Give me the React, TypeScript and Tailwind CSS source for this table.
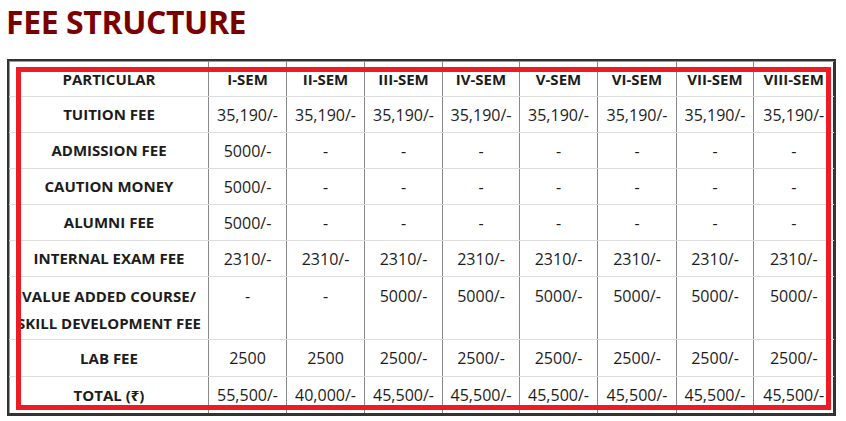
import React from "react";

const sems = ["I-SEM", "II-SEM", "III-SEM", "IV-SEM", "V-SEM", "VI-SEM", "VII-SEM", "VIII-SEM"];
const widths = [78, 78, 78, 77, 78, 79, 77, 80];

type Row = { label: React.ReactNode; vals: string[]; h: number; top?: boolean };

const rows: Row[] = [
  { label: "TUITION FEE", vals: Array(8).fill("35,190/-"), h: 36 },
  { label: "ADMISSION FEE", vals: ["5000/-", "-", "-", "-", "-", "-", "-", "-"], h: 36 },
  { label: "CAUTION MONEY", vals: ["5000/-", "-", "-", "-", "-", "-", "-", "-"], h: 36 },
  { label: "ALUMNI FEE", vals: ["5000/-", "-", "-", "-", "-", "-", "-", "-"], h: 36 },
  { label: "INTERNAL EXAM FEE", vals: Array(8).fill("2310/-"), h: 36 },
  {
    label: (
      <>
        VALUE ADDED COURSE/
        <br />
        SKILL DEVELOPMENT FEE
      </>
    ),
    vals: ["-", "-", "5000/-", "5000/-", "5000/-", "5000/-", "5000/-", "5000/-"],
    h: 63,
    top: true,
  },
  { label: "LAB FEE", vals: ["2500", "2500", "2500/-", "2500/-", "2500/-", "2500/-", "2500/-", "2500/-"], h: 37 },
  { label: "TOTAL (₹)", vals: ["55,500/-", "40,000/-", "45,500/-", "45,500/-", "45,500/-", "45,500/-", "45,500/-", "45,500/-"], h: 36 },
];

export default function App() {
  return (
    <div
      className="relative w-[846px] h-[421px] bg-white text-[#1c1c1c]"
      style={{ fontFamily: '"Open Sans", "Noto Sans", sans-serif' }}
    >
      <div className="h-[59px] pl-[6px]">
        <h1 className="text-[32px] leading-[44px] font-bold text-[#7a0000] tracking-[-0.4px]">FEE STRUCTURE</h1>
      </div>
      <div className="ml-[7px] w-[829px] border-t-2 border-l-2 border-r-[3px] border-b-[3px] border-[#333]">
        <table className="table-fixed border-collapse w-[824px]">
          <colgroup>
            <col style={{ width: 199 }} />
            {widths.map((w, i) => (
              <col key={i} style={{ width: w }} />
            ))}
          </colgroup>
          <thead>
            <tr className="h-[35px]">
              <th className="border-l border-t border-r border-r-[#888] border-l-[#999] border-t-[#999] border-b border-b-[#ddd] text-center align-middle text-[15px] font-bold p-0">
                PARTICULAR
              </th>
              {sems.map((s, i) => (
                <th
                  key={s}
                  className={`border-t border-t-[#999] border-b border-b-[#ddd] ${i < 7 ? "border-r border-r-[#888]" : ""} text-center align-middle text-[15px] font-bold p-0 whitespace-nowrap`}
                >
                  {s}
                </th>
              ))}
            </tr>
          </thead>
          <tbody>
            {rows.map((r, ri) => (
              <tr key={ri} style={{ height: r.h }}>
                <td
                  className={`border-l border-l-[#999] border-r border-r-[#888] ${ri < rows.length - 1 ? "border-b border-b-[#ddd]" : ""} text-center text-[15px] font-bold p-0 whitespace-nowrap ${r.top ? "align-top pt-[6px] leading-[27px]" : "align-middle"}`}
                >
                  {r.label}
                </td>
                {r.vals.map((v, i) => (
                  <td
                    key={i}
                    className={`${i < 7 ? "border-r border-r-[#888]" : ""} ${ri < rows.length - 1 ? "border-b border-b-[#ddd]" : ""} text-center text-[16px] p-0 whitespace-nowrap ${r.top ? "align-top pt-[6px] leading-[27px]" : "align-middle"}`}
                  >
                    {v}
                  </td>
                ))}
              </tr>
            ))}
          </tbody>
        </table>
      </div>
      <div className="absolute left-[16px] top-[67px] w-[815px] h-[343px] border-[5px] border-[#ed1c24] pointer-events-none" />
    </div>
  );
}
